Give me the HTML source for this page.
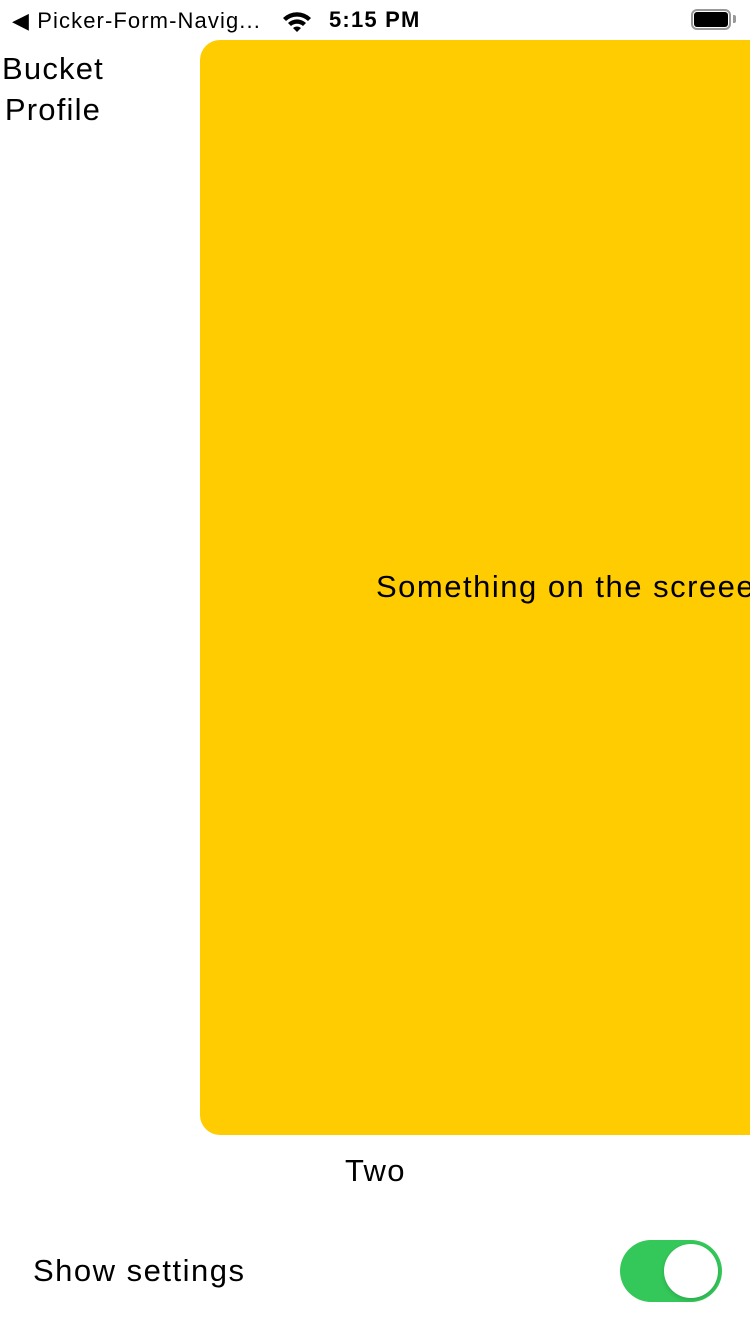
<!DOCTYPE html>
<html><head><meta charset="utf-8"><style>
body{margin:0;width:750px;height:1334px;background:#fff;position:relative;overflow:hidden;font-family:"Liberation Sans",sans-serif;color:#000}
.a{position:absolute;white-space:nowrap}
</style></head><body>
<div class="a" style="left:12px;top:8px;font-size:22px;letter-spacing:1.1px">&#9664; Picker-Form-Navig...</div>
<svg class="a" style="left:281px;top:10px" width="32" height="24" viewBox="0 0 32 24"><path d="M2 8 A20 20 0 0 1 30 8 L27 11 A16 16 0 0 0 5 11Z M7 13 A13 13 0 0 1 25 13 L22 16 A9 9 0 0 0 10 16Z M12 18 A6 6 0 0 1 20 18 L16 22Z" fill="#000"/></svg>
<div class="a" style="left:329px;top:7px;font-size:22px;font-weight:bold;letter-spacing:1.2px">5:15 PM</div>
<div class="a" style="left:691px;top:9px;width:40px;height:21px;border:2px solid #999;border-radius:6px;box-sizing:border-box"></div>
<div class="a" style="left:694px;top:12px;width:34px;height:15px;background:#000;border-radius:3px"></div>
<div class="a" style="left:733px;top:15px;width:3px;height:8px;background:#999;border-radius:0 2px 2px 0"></div>
<div class="a" style="left:0;top:48px;font-size:31px;line-height:41px;text-align:center;width:106px;letter-spacing:1.2px">Bucket<br>Profile</div>
<div class="a" style="left:200px;top:40px;width:600px;height:1095px;background:#fecc00;border-radius:20px"></div>
<div class="a" style="left:376px;top:569px;font-size:31px;letter-spacing:1.5px">Something on the screeen</div>
<div class="a" style="left:345px;top:1153px;font-size:31px;letter-spacing:1.3px">Two</div>
<div class="a" style="left:33px;top:1253px;font-size:31px;letter-spacing:1.5px">Show settings</div>
<div class="a" style="left:620px;top:1240px;width:102px;height:62px;background:#34c759;border-radius:31px"></div>
<div class="a" style="left:664px;top:1244px;width:54px;height:54px;background:#fff;border-radius:50%;box-shadow:0 2px 4px rgba(0,0,0,.15)"></div>
</body></html>
